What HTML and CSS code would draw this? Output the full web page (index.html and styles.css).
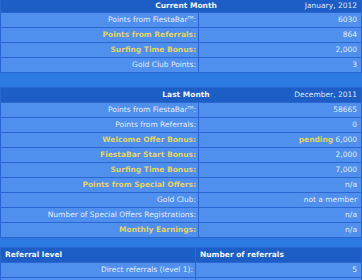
FILE: index.html
```html
<!DOCTYPE html>
<html>
<head>
<meta charset="utf-8">
<link rel="stylesheet" href="styles.css">
</head>
<body>
<table class="stats first">
  <colgroup><col class="c-label"><col></colgroup>
  <tr><td colspan="2" class="head short"><div class="head-in"><span></span><b class="title">Current Month</b><span class="date">January, 2012</span></div></td></tr>
  <tr><td class="lbl">Points from FiestaBar<sup>TM</sup>:</td><td class="val">6030</td></tr>
  <tr><td class="lbl hl">Points from Referrals:</td><td class="val">864</td></tr>
  <tr><td class="lbl hl">Surfing Time Bonus:</td><td class="val">2,000</td></tr>
  <tr><td class="lbl">Gold Club Points:</td><td class="val">3</td></tr>
</table>

<table class="stats second">
  <colgroup><col class="c-label"><col></colgroup>
  <tr><td colspan="2" class="head"><div class="head-in"><span></span><b class="title">Last Month</b><span class="date">December, 2011</span></div></td></tr>
  <tr><td class="lbl">Points from FiestaBar<sup>TM</sup>:</td><td class="val">58665</td></tr>
  <tr><td class="lbl">Points from Referrals:</td><td class="val">0</td></tr>
  <tr><td class="lbl hl">Welcome Offer Bonus:</td><td class="val"><b class="pending">pending</b> 6,000</td></tr>
  <tr><td class="lbl hl">FiestaBar Start Bonus:</td><td class="val">2,000</td></tr>
  <tr><td class="lbl hl">Surfing Time Bonus:</td><td class="val">7,000</td></tr>
  <tr><td class="lbl hl">Points from Special Offers:</td><td class="val">n/a</td></tr>
  <tr><td class="lbl">Gold Club:</td><td class="val">not a member</td></tr>
  <tr><td class="lbl">Number of Special Offers Registrations:</td><td class="val">n/a</td></tr>
  <tr><td class="lbl hl">Monthly Earnings:</td><td class="val">n/a</td></tr>
</table>

<table class="stats third">
  <colgroup><col class="c-ref"><col></colgroup>
  <tr><th class="head left">Referral level</th><th class="head left">Number of referrals</th></tr>
  <tr><td class="lbl">Direct referrals (level 1):</td><td class="val">5</td></tr>
  <tr><td class="lbl"></td><td class="val"></td></tr>
</table>
</body>
</html>
```

FILE: styles.css
```css
html, body {
  margin: 0;
  padding: 0;
}
body {
  width: 362px;
  height: 280px;
  overflow: hidden;
  background: #2e78e2;
  font-family: "DejaVu Sans", Verdana, sans-serif;
  font-size: 7.5px;
  color: #e2ecff;
}
.stats {
  width: 362px;
  table-layout: fixed;
  border-collapse: separate;
  border-spacing: 1px;
  background: #2a66cf;
}
.first { margin-top: -1px; }
.second { margin-top: 14px; }
.third { margin-top: 9px; }
.c-label { width: 197px; }
.c-ref { width: 194px; }
td, th {
  height: 14px;
  line-height: 14px;
  padding: 0;
  white-space: nowrap;
  overflow: hidden;
}
.head {
  background: #1d5dc6;
  color: #f2f6ff;
  font-weight: bold;
}
.head.short {
  height: 12px;
  line-height: 12px;
}
.head-in {
  display: grid;
  grid-template-columns: 1fr auto 1fr;
  padding-left: 10px;
}
.title { font-weight: bold; }
.date {
  font-weight: normal;
  text-align: right;
  padding-right: 4px;
  color: #dfe9ff;
}
.left {
  text-align: left;
  padding-left: 4px;
}
.lbl {
  background: #4f90ef;
  text-align: right;
  padding-right: 2px;
}
.val {
  background: #4f90ef;
  text-align: right;
  padding-right: 4px;
}
.hl {
  color: #e3d463;
  font-weight: bold;
}
.pending {
  color: #e3d463;
}
sup {
  font-size: 4px;
  line-height: 0;
  vertical-align: 3px;
}
```
